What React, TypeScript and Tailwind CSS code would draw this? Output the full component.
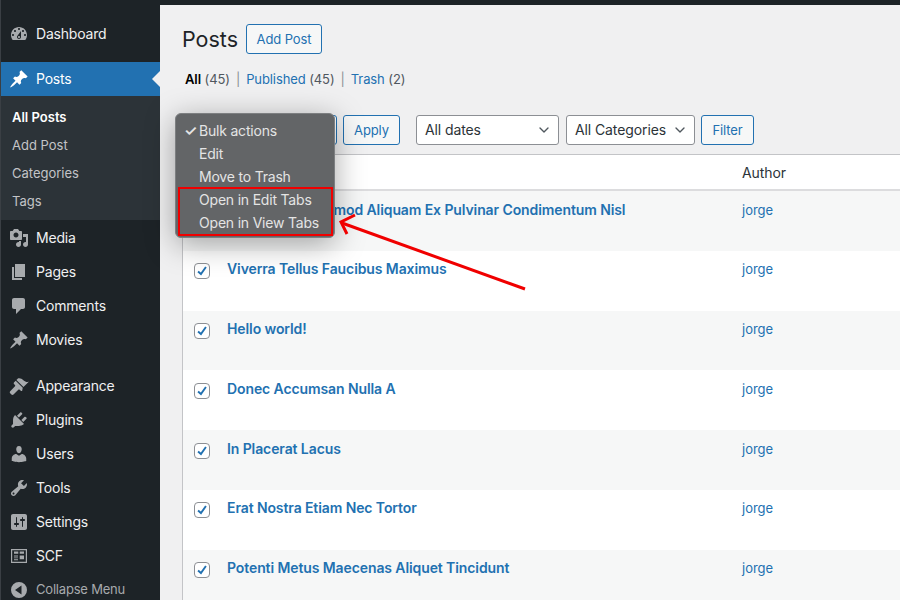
import { ChevronDown } from "lucide-react";

const font = { fontFamily: "Inter, 'Liberation Sans', sans-serif" };

const icons: Record<string, string> = {
  dashboard:
    "M3.76 16h12.48c1.1-1.37 1.76-3.11 1.76-5 0-4.42-3.58-8-8-8s-8 3.58-8 8c0 1.89.66 3.63 1.76 5zM10 4c.55 0 1 .45 1 1s-.45 1-1 1-1-.45-1-1 .45-1 1-1zM6 6c.55 0 1 .45 1 1s-.45 1-1 1-1-.45-1-1 .45-1 1-1zm8 0c.55 0 1 .45 1 1s-.45 1-1 1-1-.45-1-1 .45-1 1-1zm-5.37 5.55L12 7v6c0 1.1-.9 2-2 2s-2-.9-2-2c0-.57.24-1.08.63-1.45zM4 10c.55 0 1 .45 1 1s-.45 1-1 1-1-.45-1-1 .45-1 1-1zm12 0c.55 0 1 .45 1 1s-.45 1-1 1-1-.45-1-1 .45-1 1-1zm-5 3c0-.55-.45-1-1-1s-1 .45-1 1 .45 1 1 1 1-.45 1-1z",
  pin: "M10.44 3.02l1.82-1.82 6.36 6.35-1.83 1.82c-1.05-.68-2.48-.57-3.41.36l-.75.75c-.92.93-1.04 2.35-.35 3.41l-1.83 1.82-2.41-2.41-2.8 2.79c-.42.42-3.38 2.71-3.8 2.29s1.86-3.39 2.28-3.81l2.79-2.79L4.1 9.36l1.83-1.82c1.05.69 2.48.57 3.4-.36l.75-.75c.93-.92 1.05-2.35.36-3.41z",
  media:
    "M13 11V4c0-.55-.45-1-1-1h-1.67L9 1H5L3.67 3H2c-.55 0-1 .45-1 1v7c0 .55.45 1 1 1h10c.55 0 1-.45 1-1zM7 4.5c1.38 0 2.5 1.12 2.5 2.5S8.38 9.5 7 9.5 4.5 8.38 4.5 7 5.62 4.5 7 4.5zM14 6h5v10.5c0 1.38-1.12 2.5-2.5 2.5S14 17.88 14 16.5s1.12-2.5 2.5-2.5c.17 0 .34.02.5.05V9h-3V6zm-4 8.05V13h2v3.5c0 1.38-1.12 2.5-2.5 2.5S7 17.88 7 16.5 8.12 14 9.5 14c.17 0 .34.02.5.05z",
  pages: "M6 15V2h10v13H6zm-1 1h8v2H3V5h2v11z",
  comments:
    "M5 2h9c1.1 0 2 .9 2 2v7c0 1.1-.9 2-2 2h-2l-5 5v-5H5c-1.1 0-2-.9-2-2V4c0-1.1.9-2 2-2z",
  appearance:
    "M14.48 11.06L7.41 3.99l1.5-1.5c.5-.56 2.3-.47 3.51.32 1.21.8 1.43 1.28 2.91 2.1 1.18.64 2.45 1.26 4.45.85zm-.71.71L6.7 4.7 4.93 6.47c-.39.39-.39 1.02 0 1.41l1.06 1.06c.39.39.39 1.03 0 1.42L1.2 15.2c-.6.6-.6 1.5 0 2.1l1.2 1.2c.6.6 1.5.6 2.1 0l4.8-4.8c.39-.39 1.03-.39 1.42 0l1.06 1.06c.39.39 1.02.39 1.41 0z",
  plugins:
    "M13.11 4.36L9.87 7.6 8 5.73l3.24-3.24c.35-.34 1.05-.2 1.56.32.52.51.66 1.21.31 1.55zm-8 1.77l.91-1.12 9.01 9.01-1.19.84c-.71.71-2.63 1.16-3.82 1.16H6.14L4.9 17.26c-.59.59-1.54.59-2.12 0-.59-.58-.59-1.53 0-2.12l1.24-1.24v-3.88c0-1.13.4-3.19 1.09-3.89zm7.26 3.97l3.24-3.24c.34-.35 1.04-.21 1.55.31.52.51.66 1.21.31 1.55l-3.24 3.25z",
  users:
    "M10 9.25c-2.27 0-2.73-3.44-2.73-3.44C7 4.02 7.82 2 9.97 2c2.16 0 2.98 2.02 2.71 3.81 0 0-.41 3.44-2.68 3.44zm0 2.57L12.72 10c2.39 0 4.52 2.33 4.52 4.53v2.49s-3.65 1.13-7.24 1.13c-3.65 0-7.24-1.13-7.24-1.13v-2.49c0-2.25 1.94-4.48 4.47-4.48z",
  tools:
    "M16.68 9.77c-1.34 1.34-3.3 1.67-4.95.99l-5.41 6.52c-.99.99-2.59.99-3.58 0s-.99-2.59 0-3.57l6.52-5.42c-.68-1.65-.35-3.61.99-4.95 1.28-1.28 3.12-1.62 4.72-1.06l-2.89 2.89 2.82 2.82 2.86-2.87c.53 1.58.18 3.39-1.08 4.67zM3.81 16.21c.4.39 1.04.39 1.43 0 .4-.4.4-1.04 0-1.43-.39-.4-1.03-.4-1.43 0-.39.39-.39 1.03 0 1.43z",
  settings:
    "M18 16V4c0-1.1-.9-2-2-2H4c-1.1 0-2 .9-2 2v12c0 1.1.9 2 2 2h12c1.1 0 2-.9 2-2zM8 11h1c.55 0 1 .45 1 1s-.45 1-1 1H8v1.5c0 .28-.22.5-.5.5s-.5-.22-.5-.5V13H6c-.55 0-1-.45-1-1s.45-1 1-1h1V5.5c0-.28.22-.5.5-.5s.5.22.5.5V11zm5-2h-1c-.55 0-1-.45-1-1s.45-1 1-1h1V5.5c0-.28.22-.5.5-.5s.5.22.5.5V7h1c.55 0 1 .45 1 1s-.45 1-1 1h-1v5.5c0 .28-.22.5-.5.5s-.5-.22-.5-.5V9z",
  scf: "M2 3h16v14H2V3zm1.2 1.2v11.6h13.6V4.200H3.200zM5 5.500h4.300v2.300H5V5.500zm5.700 0H15v2.300h-4.300V5.500zM5 9.500h4v.9H5v-.9zm0 1.900h4v.9H5v-.9zm0 1.900h4v.9H5v-.9zm5.700-3.800H15v3.800h-4.300V9.500z",
  collapse:
    "M10 2a8 8 0 1 1 0 16 8 8 0 0 1 0-16zm2.500 3.500L6 10l6.500 4.500v-9z",
};

function Dashicon({ name, className }: { name: string; className?: string }) {
  return (
    <svg viewBox="0 0 20 20" className={className} fill="currentColor" fillRule="evenodd">
      <path d={icons[name]} />
    </svg>
  );
}

function MenuItem({ icon, label, active }: { icon: string; label: string; active?: boolean }) {
  return (
    <div
      className={`relative flex h-[34px] items-center text-[14px] tracking-[-0.2px] ${
        active ? "bg-[#2271b1] text-white" : "text-[#f0f0f1]"
      }`}
    >
      <div className="flex w-[35px] justify-center">
        <Dashicon name={icon} className={`h-5 w-5 ${active ? "text-white" : "text-[#a7aaad]"}`} />
      </div>
      <span className="pb-[1px]">{label}</span>
      {active && (
        <div className="absolute right-0 top-[9px] h-0 w-0 border-y-[8px] border-r-[8px] border-y-transparent border-r-[#f0f0f1]" />
      )}
    </div>
  );
}

function Sidebar() {
  return (
    <div className="w-[160px] shrink-0 overflow-hidden border-l border-[#3a3f44] bg-[#1d2327] pt-[17px]">
      <MenuItem icon="dashboard" label="Dashboard" />
      <div className="mt-[11px]">
        <MenuItem icon="pin" label="Posts" active />
      </div>
      <div className="flex h-[124px] flex-col justify-center gap-[6px] bg-[#2c3338] pl-[11px] pt-[2px] text-[13px] text-[#c3c4c7]">
        <div className="font-semibold text-white leading-[22px]">All Posts</div>
        <div className="leading-[22px]">Add Post</div>
        <div className="leading-[22px]">Categories</div>
        <div className="leading-[22px]">Tags</div>
      </div>
      <div className="mt-[1px]">
        <MenuItem icon="media" label="Media" />
        <MenuItem icon="pages" label="Pages" />
        <MenuItem icon="comments" label="Comments" />
        <MenuItem icon="pin" label="Movies" />
      </div>
      <div className="mt-[12px]">
        <MenuItem icon="appearance" label="Appearance" />
        <MenuItem icon="plugins" label="Plugins" />
        <MenuItem icon="users" label="Users" />
        <MenuItem icon="tools" label="Tools" />
        <MenuItem icon="settings" label="Settings" />
        <MenuItem icon="scf" label="SCF" />
      </div>
      <div className="flex h-[34px] items-center text-[13px] tracking-[-0.2px] text-[#a7aaad]">
        <div className="flex w-[35px] justify-center">
          <Dashicon name="collapse" className="h-5 w-5" />
        </div>
        <span>Collapse Menu</span>
      </div>
    </div>
  );
}

function OutlineButton({ label, className }: { label: string; className?: string }) {
  return (
    <button
      className={`rounded-[3px] border border-[#2271b1] bg-[#f6f7f7] pt-[1px] text-[13px] tracking-[-0.1px] text-[#2271b1] ${className ?? ""}`}
    >
      {label}
    </button>
  );
}

function SelectBox({ label, className }: { label: string; className?: string }) {
  return (
    <div
      className={`flex h-[30px] items-center justify-between rounded-[3px] border border-[#8c8f94] bg-white pb-[1px] pl-[8px] pr-[6px] text-[14px] tracking-[-0.1px] text-[#2c3338] ${className ?? ""}`}
    >
      <span>{label}</span>
      <ChevronDown className="h-4 w-4 text-[#50575e]" strokeWidth={2} />
    </div>
  );
}

const posts = [
  "Vestibulum Euismod Aliquam Ex Pulvinar Condimentum Nisl",
  "Viverra Tellus Faucibus Maximus",
  "Hello world!",
  "Donec Accumsan Nulla A",
  "In Placerat Lacus",
  "Erat Nostra Etiam Nec Tortor",
  "Potenti Metus Maecenas Aliquet Tincidunt",
];

function PostRow({ title, odd }: { title: string; odd: boolean }) {
  return (
    <div className={`flex h-[59.8px] shrink-0 pt-[10.5px] ${odd ? "bg-[#f6f7f7]" : "bg-white"}`}>
      <div className="w-[44px] shrink-0 pl-[11px] pt-[2px]">
        <div className="flex h-4 w-4 items-center justify-center rounded-[4px] border border-[#8c8f94] bg-white">
          <svg viewBox="0 0 16 16" className="h-4 w-4" fill="none" stroke="#2271b1" strokeWidth="2.2">
            <path d="M3.500 8.500L6.800 11.500L12.500 3.500" />
          </svg>
        </div>
      </div>
      <div className="w-[515px] shrink-0 text-[14px] font-semibold leading-[16px] tracking-[-0.1px] text-[#2271b1]">
        {title}
      </div>
      <div className="text-[13px] leading-[16px] text-[#2271b1]">jorge</div>
    </div>
  );
}

function BulkMenu() {
  return (
    <div className="absolute left-[175px] top-[113px] h-[125px] w-[160px] rounded-[6px] border border-[#7d7f81] bg-[#636567] pt-[5px] text-[14px] leading-[23px] tracking-[-0.2px] text-[#e4e4e4] shadow-[0_6px_30px_rgba(0,0,0,0.35)]">
      <div className="relative pl-[23px]">
        <span className="absolute left-[8px] text-[15px] font-semibold">✓</span>
        Bulk actions
      </div>
      <div className="pl-[23px]">Edit</div>
      <div className="pl-[23px]">Move to Trash</div>
      <div className="pl-[23px]">Open in Edit Tabs</div>
      <div className="pl-[23px]">Open in View Tabs</div>
      <div className="absolute left-[2px] top-[73px] h-[49px] w-[155px] border-2 border-[#f00000]" />
    </div>
  );
}

function Arrow() {
  return (
    <svg className="absolute left-0 top-0 h-[600px] w-[900px]" viewBox="0 0 900 600" fill="none" stroke="#f00000" strokeWidth="3">
      <path d="M525 289L342 223" />
      <path d="M355 215L341 222L347 234" />
    </svg>
  );
}

export default function App() {
  return (
    <div className="relative h-[600px] w-[900px] overflow-hidden bg-[#f0f0f1]" style={font}>
      <div className="flex h-[600px] flex-col">
        <div className="h-[5px] shrink-0 bg-[#1d2327]" />
        <div className="-mt-[5px] flex min-h-0 flex-1">
          <Sidebar />
          <div className="flex min-w-0 flex-1 flex-col pt-[5px]">
            <div className="flex items-center gap-[9px] pl-[22px] pt-[19px]">
              <h1 className="w-[55px] text-[21.5px] leading-[30px] text-[#1d2327]">Posts</h1>
              <OutlineButton label="Add Post" className="h-[30px] w-[76px]" />
            </div>
            <div className="flex gap-[6px] pl-[25px] pt-[16px] text-[13px] leading-[18px] tracking-[-0.1px] text-[#50575e]">
              <span>
                <span className="font-semibold text-black">All</span> (45)
              </span>
              <span className="text-[#8c8f94]">|</span>
              <span>
                <span className="text-[#2271b1]">Published</span> (45)
              </span>
              <span className="text-[#8c8f94]">|</span>
              <span>
                <span className="text-[#2271b1]">Trash</span> (2)
              </span>
            </div>
            <div className="flex items-center pl-[16px] pt-[27px]">
              <div className="h-[30px] w-[161px] rounded-[3px] border border-[#2271b1] bg-white" />
              <OutlineButton label="Apply" className="ml-[6px] h-[30px] w-[57px]" />
              <SelectBox label="All dates" className="ml-[16px] w-[143px]" />
              <SelectBox label="All Categories" className="ml-[7px] w-[129px]" />
              <OutlineButton label="Filter" className="ml-[6px] h-[30px] w-[53px]" />
            </div>
            <div className="ml-[22px] mt-[9px] flex min-h-0 flex-1 flex-col border-l border-t border-[#c3c4c7] bg-white">
              <div className="flex h-[36px] shrink-0 items-center border-b-2 border-[#dcdcde] pl-[559px] text-[14px] tracking-[-0.1px] text-[#2c3338]">
                Author
              </div>
              {posts.map((title, i) => (
                <PostRow key={title} title={title} odd={i % 2 === 0} />
              ))}
            </div>
          </div>
        </div>
      </div>
      <BulkMenu />
      <Arrow />
    </div>
  );
}
